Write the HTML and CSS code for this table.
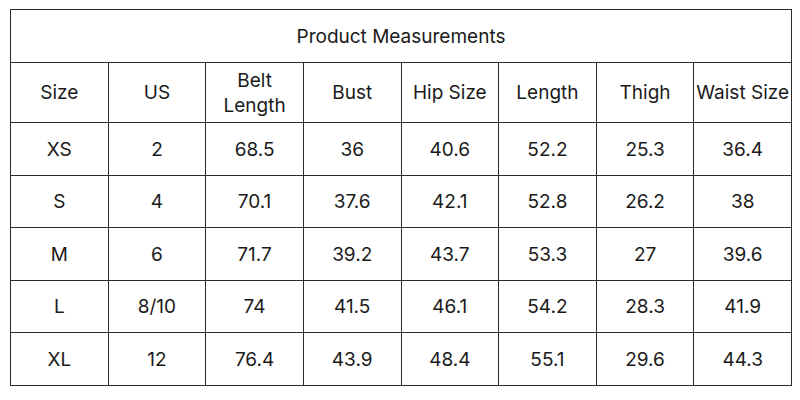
FILE: index.html
```html
<!DOCTYPE html>
<html>
<head>
<meta charset="utf-8">
<link rel="stylesheet" href="styles.css">
</head>
<body>
<div class="wrap">
<table class="sizes">
<colgroup>
<col><col><col><col><col><col><col><col>
</colgroup>
<tr class="title"><td colspan="8">Product Measurements</td></tr>
<tr class="head"><td>Size</td><td>US</td><td>Belt<br>Length</td><td>Bust</td><td>Hip Size</td><td>Length</td><td>Thigh</td><td>Waist Size</td></tr>
<tr class="r53"><td>XS</td><td>2</td><td>68.5</td><td>36</td><td>40.6</td><td>52.2</td><td>25.3</td><td>36.4</td></tr>
<tr class="r52"><td>S</td><td>4</td><td>70.1</td><td>37.6</td><td>42.1</td><td>52.8</td><td>26.2</td><td>38</td></tr>
<tr class="r53"><td>M</td><td>6</td><td>71.7</td><td>39.2</td><td>43.7</td><td>53.3</td><td>27</td><td>39.6</td></tr>
<tr class="r52"><td>L</td><td>8/10</td><td>74</td><td>41.5</td><td>46.1</td><td>54.2</td><td>28.3</td><td>41.9</td></tr>
<tr class="r53"><td>XL</td><td>12</td><td>76.4</td><td>43.9</td><td>48.4</td><td>55.1</td><td>29.6</td><td>44.3</td></tr>
</table>
</div>
</body>
</html>
```
FILE: styles.css
```css
html, body {
  margin: 0;
  padding: 0;
  background: #fff;
}
.wrap {
  padding: 9px 0 0 10px;
}
.sizes {
  border-collapse: collapse;
  table-layout: fixed;
  width: 782px;
  font-family: "Inter", sans-serif;
  font-size: 19px;
  color: #1a1a1a;
}
.sizes td {
  border: 1px solid #2b2b2b;
  text-align: center;
  vertical-align: middle;
  padding: 0;
  line-height: 25px;
}
.title td { height: 52px; }
.head td { height: 59px; }
.r53 td { height: 52px; }
.r52 td { height: 51px; }
```
